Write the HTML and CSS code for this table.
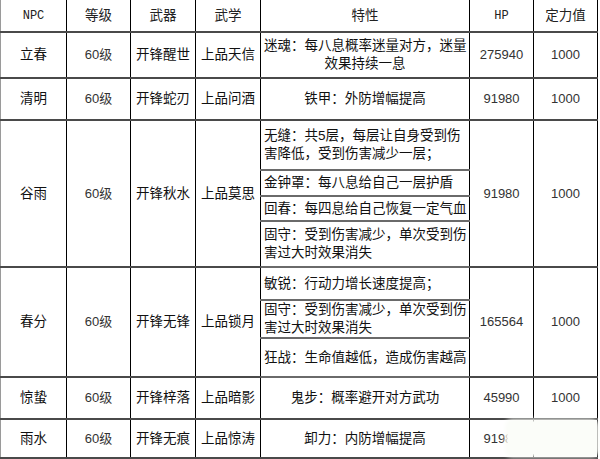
FILE: index.html
```html
<!DOCTYPE html>
<html lang="zh-CN">
<head>
<meta charset="utf-8">
<title>NPC 属性表</title>
<link rel="stylesheet" href="styles.css">
</head>
<body>
<div class="sheet">
<table class="npc">
  <colgroup>
    <col class="c-npc"><col class="c-lv"><col class="c-wq"><col class="c-wx"><col class="c-tx"><col class="c-hp"><col class="c-dl">
  </colgroup>
  <tr class="r-head">
    <th class="latin">NPC</th><th>等级</th><th>武器</th><th>武学</th><th>特性</th><th class="latin">HP</th><th>定力值</th>
  </tr>
  <tr class="r-46">
    <td>立春</td><td class="num">60级</td><td>开锋醒世</td><td>上品天信</td>
    <td class="trait">迷魂：每八息概率迷量对方，迷量<br>效果持续一息</td>
    <td class="num">275940</td><td class="num">1000</td>
  </tr>
  <tr class="r-42">
    <td>清明</td><td class="num">60级</td><td>开锋蛇刃</td><td>上品问酒</td>
    <td class="trait">铁甲：外防增幅提高</td>
    <td class="num">91980</td><td class="num">1000</td>
  </tr>
  <tr class="r-50">
    <td rowspan="4">谷雨</td><td rowspan="4" class="num">60级</td><td rowspan="4">开锋秋水</td><td rowspan="4">上品莫思</td>
    <td class="sub">无缝：共5层，每层让自身受到伤<br>害降低，受到伤害减少一层；</td>
    <td rowspan="4" class="num">91980</td><td rowspan="4" class="num">1000</td>
  </tr>
  <tr class="r-26"><td class="sub">金钟罩：每八息给自己一层护盾</td></tr>
  <tr class="r-25"><td class="sub">回春：每四息给自己恢复一定气血</td></tr>
  <tr class="r-46"><td class="sub">固守：受到伤害减少，单次受到伤<br>害过大时效果消失</td></tr>
  <tr class="r-33">
    <td rowspan="3">春分</td><td rowspan="3" class="num">60级</td><td rowspan="3">开锋无锋</td><td rowspan="3">上品锁月</td>
    <td class="sub">敏锐：行动力增长速度提高；</td>
    <td rowspan="3" class="num">165564</td><td rowspan="3" class="num">1000</td>
  </tr>
  <tr class="r-37"><td class="sub">固守：受到伤害减少，单次受到伤<br>害过大时效果消失</td></tr>
  <tr class="r-39"><td class="sub">狂战：生命值越低，造成伤害越高</td></tr>
  <tr class="r-42">
    <td>惊蛰</td><td class="num">60级</td><td>开锋梓落</td><td>上品暗影</td>
    <td class="trait">鬼步：概率避开对方武功</td>
    <td class="num">45990</td><td class="num">1000</td>
  </tr>
  <tr class="r-39">
    <td>雨水</td><td class="num">60级</td><td>开锋无痕</td><td>上品惊涛</td>
    <td class="trait">卸力：内防增幅提高</td>
    <td class="num">91980</td><td class="num">1000</td>
  </tr>
</table>
<div class="watermark"></div>
</div>
</body>
</html>
```
FILE: styles.css
```css
html, body {
  margin: 0;
  padding: 0;
  background: #ffffff;
}

.sheet {
  position: relative;
  width: 600px;
  height: 459px;
  overflow: hidden;
}

.npc {
  border-collapse: collapse;
  table-layout: fixed;
  width: 598px;
  font-family: "Liberation Sans", "Noto Sans CJK SC", sans-serif;
  font-size: 13.5px;
  color: #111;
}

.c-npc { width: 66px; }
.c-lv { width: 64px; }
.c-wq { width: 65px; }
.c-wx { width: 65px; }
.c-tx { width: 209px; }
.c-hp { width: 64px; }
.c-dl { width: 64px; }

.npc th,
.npc td {
  border-left: 1px solid #000;
  border-right: 1px solid #000;
  border-top: 2px solid #4a4a4a;
  border-bottom: 2px solid #4a4a4a;
  padding: 0 3px;
  text-align: center;
  vertical-align: middle;
  line-height: 18px;
  white-space: nowrap;
  font-weight: normal;
}

.npc tr:first-child th {
  border-top: none;
}

.npc th:first-child,
.npc td:first-child {
  border-left: 1px solid #9a9a9a;
}

.npc th {
  color: #222;
}

.npc .latin {
  font-family: "Liberation Mono", "Noto Sans CJK SC", monospace;
  font-size: 12px;
}

.npc .num {
  color: #333;
  font-size: 13px;
}

.npc .sub {
  text-align: left;
  border-top: 2px solid #6a6a6a;
  border-bottom: 2px solid #6a6a6a;
}

.r-head { height: 32px; }
.r-46 { height: 46px; }
.r-42 { height: 42px; }
.r-50 { height: 50px; }
.r-26 { height: 26px; }
.r-25 { height: 25px; }
.r-33 { height: 33px; }
.r-37 { height: 37px; }
.r-39 { height: 39px; }

.watermark {
  position: absolute;
  left: 508px;
  top: 422px;
  width: 88px;
  height: 32px;
  background: #fbfdf9;
  box-shadow: 0 0 4px 3px #fbfdf9;
  border-radius: 4px;
}
```
